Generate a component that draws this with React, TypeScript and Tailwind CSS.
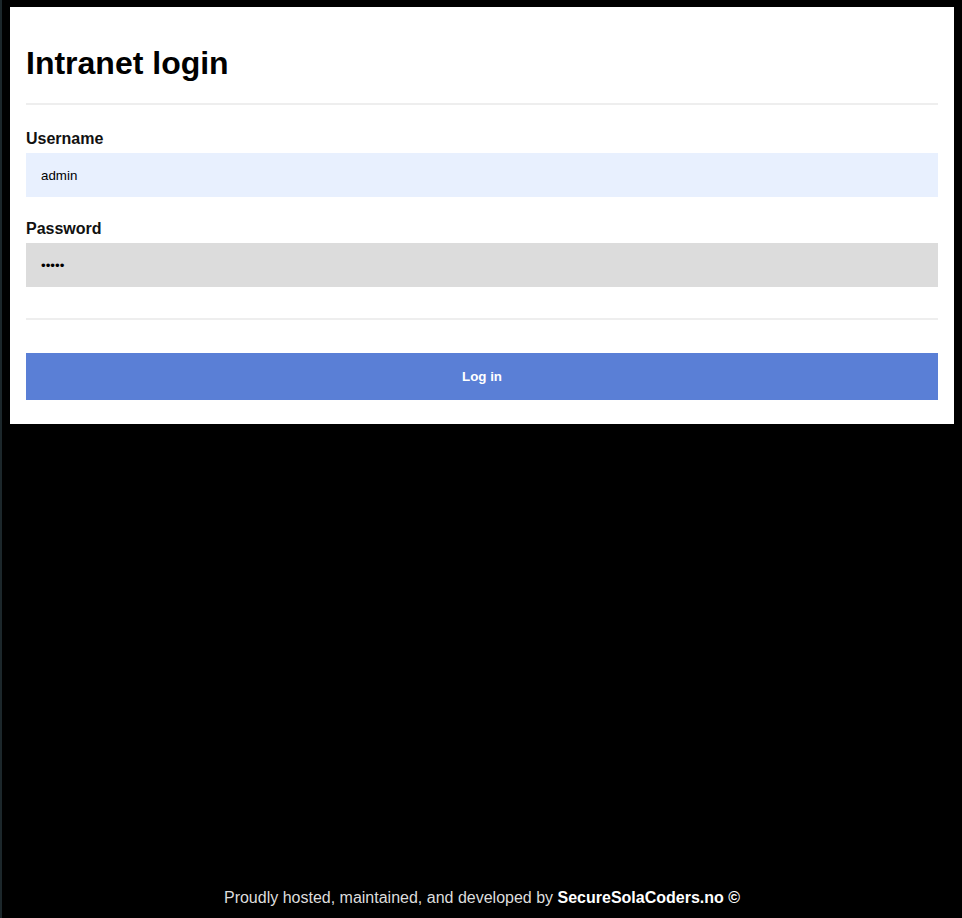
const font = { fontFamily: '"Liberation Sans", Arial, sans-serif' };

const App = () => {
    return (
        <div
            className="min-h-[918px] bg-black border-l-2 border-[#1c272b] flex flex-col"
            style={font}
        >
            {/* Login card */}
            <div className="bg-white mt-[7px] ml-2 mr-2 px-4 pt-4 pb-[24px]">
                <h1 className="text-[32px] leading-[37px] font-bold text-black mt-[22px] mb-[21px]">
                    Intranet login
                </h1>
                <div className="h-[2px] bg-[#eeeeee]" />

                <form onSubmit={(e) => e.preventDefault()}>
                    <label className="block mt-[25px] mb-[5px] text-base leading-[18px] font-bold text-[#111]">
                        Username
                    </label>
                    <input
                        type="text"
                        defaultValue="admin"
                        className="block w-full h-[44px] px-[15px] bg-[#e8f0fe] text-[13.33px] text-black outline-none"
                        style={font}
                    />

                    <label className="block mt-[23px] mb-[5px] text-base leading-[18px] font-bold text-[#111]">
                        Password
                    </label>
                    <input
                        type="password"
                        defaultValue="admin"
                        className="block w-full h-[44px] px-[15px] bg-[#dcdcdc] text-[13.33px] text-black outline-none"
                        style={font}
                    />

                    <div className="h-[2px] bg-[#eeeeee] mt-[31px]" />

                    <button
                        type="submit"
                        className="block w-full h-[47px] mt-[33px] bg-[#5a7fd6] text-white text-[13.33px] font-bold"
                        style={font}
                    >
                        Log in
                    </button>
                </form>
            </div>

            {/* Footer */}
            <div className="flex-1 flex items-end justify-center pb-[11px]">
                <p className="text-base leading-[18px] text-[#dddddd]">
                    Proudly hosted, maintained, and developed by{' '}
                    <strong className="font-bold text-white">SecureSolaCoders.no ©</strong>
                </p>
            </div>
        </div>
    );
};

export default App;
